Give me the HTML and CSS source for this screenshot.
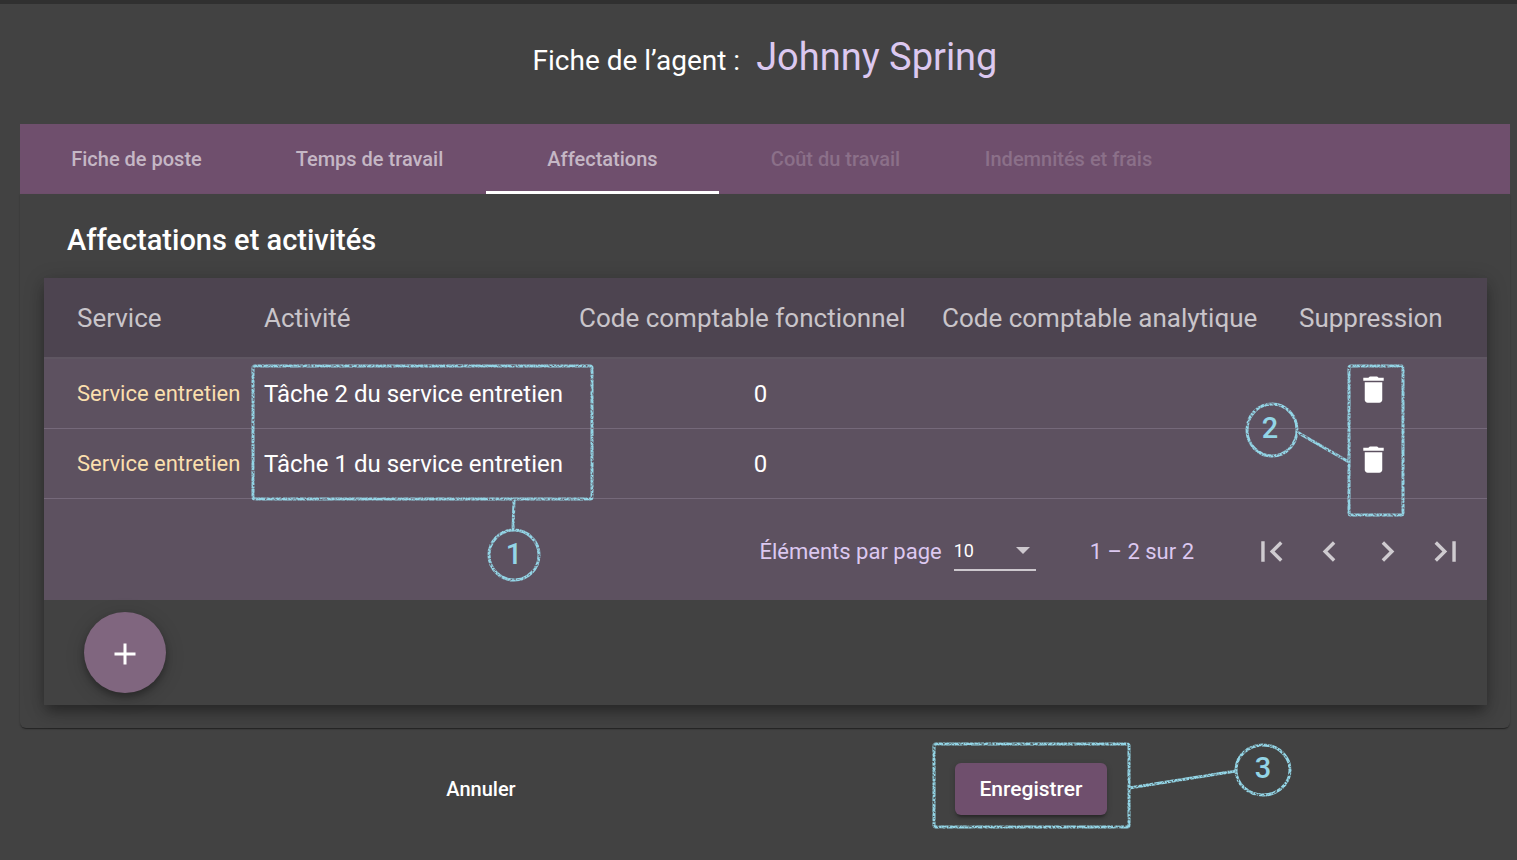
FILE: index.html
```
<!DOCTYPE html>
<html lang="fr">
<head>
<meta charset="utf-8">
<title>Fiche de l’agent</title>
<link rel="stylesheet" href="styles.css">
</head>
<body>
<svg class="defs" aria-hidden="true">
  <defs>
    <filter id="chalk" filterUnits="userSpaceOnUse" x="-10" y="-10" width="400" height="260">
      <feTurbulence type="fractalNoise" baseFrequency="0.45" numOctaves="2" seed="4" result="noise"/>
      <feDisplacementMap in="SourceGraphic" in2="noise" scale="1" xChannelSelector="R" yChannelSelector="G" result="rough"/>
      <feColorMatrix in="noise" type="matrix" values="0 0 0 0 0  0 0 0 0 0  0 0 0 0 0  0 3 0 0 -0.6" result="grain"/>
      <feComposite in="rough" in2="grain" operator="in"/>
    </filter>
  </defs>
</svg>
<main class="page">
  <h1 class="title">Fiche de l’agent : <span class="agent">Johnny Spring</span></h1>

  <nav class="tabs" role="tablist">
    <button class="tab" role="tab">Fiche de poste</button>
    <button class="tab" role="tab">Temps de travail</button>
    <button class="tab tab-active" role="tab" aria-selected="true">Affectations</button>
    <button class="tab" role="tab" disabled>Coût du travail</button>
    <button class="tab" role="tab" disabled>Indemnités et frais</button>
  </nav>

  <section class="card">
    <h2 class="card-title">Affectations et activités</h2>
    <div class="panel">
      <table class="table">
        <colgroup><col class="c-service"><col class="c-activity"><col class="c-func"><col class="c-ana"><col class="c-del"></colgroup>
        <thead>
          <tr><th>Service</th><th>Activité</th><th>Code comptable fonctionnel</th><th>Code comptable analytique</th><th>Suppression</th></tr>
        </thead>
        <tbody>
          <tr>
            <td class="service">Service entretien</td>
            <td class="anchor">Tâche 2 du service entretien
              <svg class="note note-1" width="345" height="220" viewBox="0 0 345 220">
                <g class="ink"><rect x="3" y="3" width="339" height="133" rx="2"/><path d="M264 137L263 167"/><ellipse cx="264" cy="192" rx="25" ry="25"/></g>
                <text x="264" y="201">1</text>
              </svg>
            </td>
            <td class="num">0</td>
            <td></td>
            <td class="del anchor">
              <button class="icon-btn" aria-label="Supprimer"><svg class="trash" viewBox="0 0 24 24"><path d="M6 19c0 1.100.9 2 2 2h8c1.100 0 2-.9 2-2V7H6v12zM19 4h-3.500l-1-1h-5l-1 1H5v2h14V4z"/></svg></button>
              <svg class="note note-2" width="162" height="158" viewBox="0 0 162 158">
                <g class="ink"><rect x="105" y="3" width="54" height="149" rx="2"/><path d="M53 69L105 99"/><ellipse cx="28" cy="67" rx="25" ry="26"/></g>
                <text x="26" y="75">2</text>
              </svg>
            </td>
          </tr>
          <tr>
            <td class="service">Service entretien</td>
            <td>Tâche 1 du service entretien</td>
            <td class="num">0</td>
            <td></td>
            <td class="del"><button class="icon-btn" aria-label="Supprimer"><svg class="trash" viewBox="0 0 24 24"><path d="M6 19c0 1.100.9 2 2 2h8c1.100 0 2-.9 2-2V7H6v12zM19 4h-3.500l-1-1h-5l-1 1H5v2h14V4z"/></svg></button></td>
          </tr>
        </tbody>
      </table>

      <div class="paginator">
        <label for="size">Éléments par page</label>
        <div class="select">
          <select id="size"><option>10</option></select>
          <svg class="caret" viewBox="0 0 14 7"><path d="M0 0h14L7 7z"/></svg>
        </div>
        <span class="range">1 – 2 sur 2</span>
        <div class="pager">
          <button class="page-btn" aria-label="Première page"><svg viewBox="0 0 24 24"><path d="M18.410 16.590L13.820 12l4.590-4.590L17 6l-6 6 6 6zM6 6h2v12H6z"/></svg></button>
          <button class="page-btn" aria-label="Page précédente"><svg viewBox="0 0 24 24"><path d="M15.410 7.410L14 6l-6 6 6 6 1.410-1.410L10.830 12z"/></svg></button>
          <button class="page-btn" aria-label="Page suivante"><svg viewBox="0 0 24 24"><path d="M10 6L8.590 7.410 13.170 12l-4.580 4.590L10 18l6-6z"/></svg></button>
          <button class="page-btn" aria-label="Dernière page"><svg viewBox="0 0 24 24"><path d="M5.590 7.410L10.180 12l-4.590 4.590L7 18l6-6-6-6zM16 6h2v12h-2z"/></svg></button>
        </div>
      </div>

      <div class="add-row">
        <button class="fab" aria-label="Ajouter"><svg viewBox="0 0 24 24"><path d="M19 13h-6v6h-2v-6H5v-2h6V5h2v6h6v2z"/></svg></button>
      </div>
    </div>
  </section>

  <footer class="actions">
    <button class="btn">Annuler</button>
    <div class="save">
      <button class="btn btn-primary">Enregistrer</button>
      <svg class="note note-3" width="362" height="90" viewBox="0 0 362 90">
        <g class="ink"><rect x="3" y="3" width="195" height="83" rx="2"/><path d="M198 47L305 30"/><ellipse cx="332" cy="29" rx="27" ry="25"/></g>
        <text x="332" y="37">3</text>
      </svg>
    </div>
  </footer>
</main>
</body>
</html>
```
FILE: styles.css
```
* { box-sizing: border-box; }

body {
  margin: 0;
  min-height: 100vh;
  background: #424242;
  border-top: 4px solid #303030;
  color: #fff;
  font-family: Roboto, "Liberation Sans", sans-serif;
}

button, select { font: inherit; color: inherit; border: 0; background: none; padding: 0; cursor: pointer; }
svg { display: block; fill: currentColor; }
.defs { position: absolute; width: 0; height: 0; }

.page { padding: 0 7px 32px 20px; }

.title {
  display: flex;
  justify-content: center;
  align-items: baseline;
  gap: 16px;
  margin: 0;
  height: 120px;
  padding-top: 28px;
  font-size: 28px;
  line-height: 50px;
  font-weight: 400;
}
.agent { font-size: 38px; color: #dcc8f0; }

.tabs { display: flex; height: 70px; background: #6f4f6d; }
.tab { width: 233px; font-size: 20px; font-weight: 500; color: #c5b7c5; border-bottom: 3px solid transparent; padding-top: 3px; }
.tab-active { border-bottom-color: #fff; }
.tab:disabled { color: #8b7089; cursor: default; }

.card {
  padding: 24px 23px 23px 24px;
  border-radius: 0 0 6px 6px;
  box-shadow: 0 2px 1px -1px rgba(0, 0, 0, .3), 0 1px 2px rgba(0, 0, 0, .25);
}
.card-title { margin: 0 0 16px; padding-left: 23px; font-size: 29px; line-height: 44px; font-weight: 500; }

.panel { box-shadow: 0 8px 12px -2px rgba(0, 0, 0, .3), 0 4px 20px rgba(0, 0, 0, .2); }

.table { width: 100%; table-layout: fixed; border-collapse: separate; border-spacing: 0; background: #5d5160; }
.c-service { width: 220px; }
.c-activity { width: 315px; }
.c-func { width: 363px; }
.c-ana { width: 357px; }
.c-del { width: 188px; }
th { height: 81px; padding: 0; background: #4d4450; border-bottom: 2px solid #5f5662; color: #c9c5ca; font-size: 26px; font-weight: 400; text-align: left; white-space: nowrap; }
td { height: 70px; padding: 0; border-bottom: 1px solid #75697a; font-size: 24px; white-space: nowrap; }
th:first-child, td:first-child { padding-left: 33px; }
.service { font-size: 22px; color: #fadfae; }
.num { text-align: center; }
.del { padding: 0 40px 8px 0; }
.icon-btn { display: block; margin: 0 auto; }
.trash { width: 35px; height: 35px; }

.paginator { display: flex; align-items: center; justify-content: flex-end; height: 101px; padding: 3px 13px 0 0; background: #5d5160; color: #dcc8f0; font-size: 22px; }
.select { position: relative; width: 82px; margin: 0 54px 0 12px; border-bottom: 2px solid #cdc8ce; }
.select select { display: block; width: 100%; height: 38px; appearance: none; color: #fff; font-size: 18px; }
.caret { position: absolute; right: 6px; top: 16px; width: 14px; height: 7px; color: #cdc8ce; pointer-events: none; }
.pager { display: flex; margin-left: 48px; color: #cfcbd0; }
.page-btn { display: grid; place-items: center; width: 58px; height: 58px; }
.page-btn svg { width: 41px; height: 41px; }

.add-row { padding: 12px 40px; }
.fab { display: grid; place-items: center; width: 82px; height: 81px; border-radius: 50%; background: #80667f; box-shadow: 0 4px 7px rgba(0, 0, 0, .3), 0 4px 20px rgba(0, 0, 0, .15); }
.fab svg { width: 36px; height: 36px; margin-top: 3px; }

.actions { display: flex; justify-content: center; gap: 416px; padding-top: 35px; }
.btn { min-width: 116px; height: 52px; padding: 0 22px; border-radius: 6px; font-size: 20px; font-weight: 500; }
.btn-primary { min-width: 152px; font-size: 21px; background: #6f4f6d; box-shadow: 0 4px 3px -2px rgba(0, 0, 0, .3), 0 2px 6px rgba(0, 0, 0, .2); }

/* Numbered callouts laid over the interface */
.anchor, .save { position: relative; }
.note { position: absolute; overflow: visible; pointer-events: none; z-index: 1; }
.note-1 { left: -14px; top: 4px; }
.note-2 { right: 81px; top: 4px; }
.note-3 { left: -24px; top: -22px; }
.ink { fill: none; stroke: #93d5e6; stroke-width: 3px; filter: url(#chalk); }
.note text { fill: #93d5e6; font-size: 29px; font-weight: 500; text-anchor: middle; }
```
